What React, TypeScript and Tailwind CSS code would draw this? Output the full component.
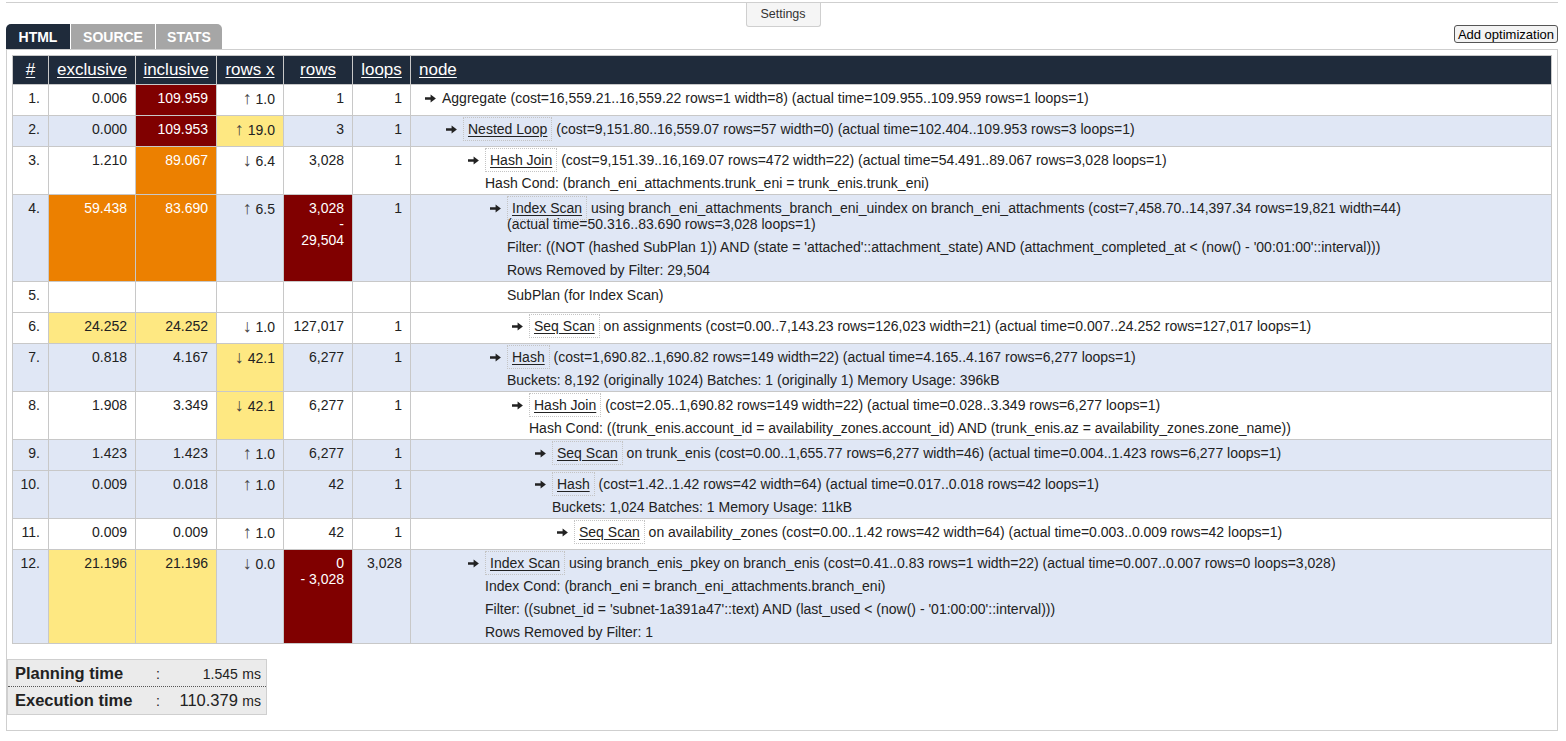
import type { ReactNode } from "react";

type Tone = "" | "red" | "orange" | "yellow";

type Row = {
	n: number;
	blue: boolean;
	ex: string;
	exTone: Tone;
	inc: string;
	incTone: Tone;
	rx: string;
	rxTone: Tone;
	rows: string[];
	rowsTone: Tone;
	loops: string;
	level: number;
	arrow: boolean;
	label: string;
	boxed: boolean;
	text: string;
	actual: string;
	details: string[];
};

const toneClass: Record<Tone, string> = {
	"": "",
	red: "bg-[#800000] text-white",
	orange: "bg-[#ec8000] text-white",
	yellow: "bg-[#fee882]",
};

const indent = [
	"ml-0",
	"ml-[21px]",
	"ml-[43px]",
	"ml-[65px]",
	"ml-[87px]",
	"ml-[110px]",
	"ml-[132px]",
];

const data: Row[] = [
	{
		n: 1,
		blue: false,
		ex: "0.006",
		exTone: "",
		inc: "109.959",
		incTone: "red",
		rx: "↑|1.0",
		rxTone: "",
		rows: ["1"],
		rowsTone: "",
		loops: "1",
		level: 0,
		arrow: true,
		label: "Aggregate",
		boxed: false,
		text: " (cost=16,559.21..16,559.22 rows=1 width=8)",
		actual: "(actual time=109.955..109.959 rows=1 loops=1)",
		details: [],
	},
	{
		n: 2,
		blue: true,
		ex: "0.000",
		exTone: "",
		inc: "109.953",
		incTone: "red",
		rx: "↑|19.0",
		rxTone: "yellow",
		rows: ["3"],
		rowsTone: "",
		loops: "1",
		level: 1,
		arrow: true,
		label: "Nested Loop",
		boxed: true,
		text: " (cost=9,151.80..16,559.07 rows=57 width=0)",
		actual: "(actual time=102.404..109.953 rows=3 loops=1)",
		details: [],
	},
	{
		n: 3,
		blue: false,
		ex: "1.210",
		exTone: "",
		inc: "89.067",
		incTone: "orange",
		rx: "↓|6.4",
		rxTone: "",
		rows: ["3,028"],
		rowsTone: "",
		loops: "1",
		level: 2,
		arrow: true,
		label: "Hash Join",
		boxed: true,
		text: " (cost=9,151.39..16,169.07 rows=472 width=22)",
		actual: "(actual time=54.491..89.067 rows=3,028 loops=1)",
		details: ["Hash Cond: (branch_eni_attachments.trunk_eni = trunk_enis.trunk_eni)"],
	},
	{
		n: 4,
		blue: true,
		ex: "59.438",
		exTone: "orange",
		inc: "83.690",
		incTone: "orange",
		rx: "↑|6.5",
		rxTone: "",
		rows: ["3,028", "-", "29,504"],
		rowsTone: "red",
		loops: "1",
		level: 3,
		arrow: true,
		label: "Index Scan",
		boxed: true,
		text: " using branch_eni_attachments_branch_eni_uindex on branch_eni_attachments (cost=7,458.70..14,397.34 rows=19,821 width=44)",
		actual: "(actual time=50.316..83.690 rows=3,028 loops=1)",
		details: [
			"Filter: ((NOT (hashed SubPlan 1)) AND (state = 'attached'::attachment_state) AND (attachment_completed_at < (now() - '00:01:00'::interval)))",
			"Rows Removed by Filter: 29,504",
		],
	},
	{
		n: 5,
		blue: false,
		ex: "",
		exTone: "",
		inc: "",
		incTone: "",
		rx: "",
		rxTone: "",
		rows: [""],
		rowsTone: "",
		loops: "",
		level: 3,
		arrow: false,
		label: "SubPlan (for Index Scan)",
		boxed: false,
		text: "",
		actual: "",
		details: [],
	},
	{
		n: 6,
		blue: false,
		ex: "24.252",
		exTone: "yellow",
		inc: "24.252",
		incTone: "yellow",
		rx: "↓|1.0",
		rxTone: "",
		rows: ["127,017"],
		rowsTone: "",
		loops: "1",
		level: 4,
		arrow: true,
		label: "Seq Scan",
		boxed: true,
		text: " on assignments (cost=0.00..7,143.23 rows=126,023 width=21)",
		actual: "(actual time=0.007..24.252 rows=127,017 loops=1)",
		details: [],
	},
	{
		n: 7,
		blue: true,
		ex: "0.818",
		exTone: "",
		inc: "4.167",
		incTone: "",
		rx: "↓|42.1",
		rxTone: "yellow",
		rows: ["6,277"],
		rowsTone: "",
		loops: "1",
		level: 3,
		arrow: true,
		label: "Hash",
		boxed: true,
		text: " (cost=1,690.82..1,690.82 rows=149 width=22)",
		actual: "(actual time=4.165..4.167 rows=6,277 loops=1)",
		details: ["Buckets: 8,192 (originally 1024) Batches: 1 (originally 1) Memory Usage: 396kB"],
	},
	{
		n: 8,
		blue: false,
		ex: "1.908",
		exTone: "",
		inc: "3.349",
		incTone: "",
		rx: "↓|42.1",
		rxTone: "yellow",
		rows: ["6,277"],
		rowsTone: "",
		loops: "1",
		level: 4,
		arrow: true,
		label: "Hash Join",
		boxed: true,
		text: " (cost=2.05..1,690.82 rows=149 width=22)",
		actual: "(actual time=0.028..3.349 rows=6,277 loops=1)",
		details: [
			"Hash Cond: ((trunk_enis.account_id = availability_zones.account_id) AND (trunk_enis.az = availability_zones.zone_name))",
		],
	},
	{
		n: 9,
		blue: true,
		ex: "1.423",
		exTone: "",
		inc: "1.423",
		incTone: "",
		rx: "↑|1.0",
		rxTone: "",
		rows: ["6,277"],
		rowsTone: "",
		loops: "1",
		level: 5,
		arrow: true,
		label: "Seq Scan",
		boxed: true,
		text: " on trunk_enis (cost=0.00..1,655.77 rows=6,277 width=46)",
		actual: "(actual time=0.004..1.423 rows=6,277 loops=1)",
		details: [],
	},
	{
		n: 10,
		blue: true,
		ex: "0.009",
		exTone: "",
		inc: "0.018",
		incTone: "",
		rx: "↑|1.0",
		rxTone: "",
		rows: ["42"],
		rowsTone: "",
		loops: "1",
		level: 5,
		arrow: true,
		label: "Hash",
		boxed: true,
		text: " (cost=1.42..1.42 rows=42 width=64)",
		actual: "(actual time=0.017..0.018 rows=42 loops=1)",
		details: ["Buckets: 1,024 Batches: 1 Memory Usage: 11kB"],
	},
	{
		n: 11,
		blue: false,
		ex: "0.009",
		exTone: "",
		inc: "0.009",
		incTone: "",
		rx: "↑|1.0",
		rxTone: "",
		rows: ["42"],
		rowsTone: "",
		loops: "1",
		level: 6,
		arrow: true,
		label: "Seq Scan",
		boxed: true,
		text: " on availability_zones (cost=0.00..1.42 rows=42 width=64)",
		actual: "(actual time=0.003..0.009 rows=42 loops=1)",
		details: [],
	},
	{
		n: 12,
		blue: true,
		ex: "21.196",
		exTone: "yellow",
		inc: "21.196",
		incTone: "yellow",
		rx: "↓|0.0",
		rxTone: "",
		rows: ["0", "- 3,028"],
		rowsTone: "red",
		loops: "3,028",
		level: 2,
		arrow: true,
		label: "Index Scan",
		boxed: true,
		text: " using branch_enis_pkey on branch_enis (cost=0.41..0.83 rows=1 width=22)",
		actual: "(actual time=0.007..0.007 rows=0 loops=3,028)",
		details: [
			"Index Cond: (branch_eni = branch_eni_attachments.branch_eni)",
			"Filter: ((subnet_id = 'subnet-1a391a47'::text) AND (last_used < (now() - '01:00:00'::interval)))",
			"Rows Removed by Filter: 1",
		],
	},
];

function NodeArrow() {
	return (
		<svg width="11" height="9" viewBox="0 0 11 9" className="text-[#222]">
			<path d="M0 3.3h5.6V0.5L10.9 4.5 5.6 8.5V5.7H0z" fill="currentColor" />
		</svg>
	);
}

function NumCell({ tone, children }: { tone: Tone; children: ReactNode }) {
	return (
		<td
			className={`border border-[#c8c8c8] pt-[5px] pb-[3px] pr-[8px] text-right align-top ${toneClass[tone]}`}
		>
			{children}
		</td>
	);
}

function RowsX({ value }: { value: string }) {
	if (!value) return null;
	const [arrow, num] = value.split("|");
	return (
		<>
			<span className="text-[#444] text-[18px] leading-[16px]">{arrow}</span> {num}
		</>
	);
}

function PlanRow({ row }: { row: Row }) {
	return (
		<tr className={row.blue ? "bg-[#e0e7f5]" : "bg-white"}>
			<NumCell tone="">{row.n}.</NumCell>
			<NumCell tone={row.exTone}>{row.ex}</NumCell>
			<NumCell tone={row.incTone}>{row.inc}</NumCell>
			<NumCell tone={row.rxTone}>
				<RowsX value={row.rx} />
			</NumCell>
			<NumCell tone={row.rowsTone}>
				{row.rows.map((r) => (
					<div key={r}>{r}</div>
				))}
			</NumCell>
			<NumCell tone="">{row.loops}</NumCell>
			<td className="border border-[#c8c8c8] pt-[5px] pb-[3px] pl-[14px] pr-[8px] align-top">
				<div className={indent[row.level]}>
					<div className="flex mb-[6px]">
						<span className="w-[17px] shrink-0 h-[16px] flex items-center">
							{row.arrow && <NodeArrow />}
						</span>
						<div className="flex-1">
							{row.boxed ? (
								<span className="border border-dotted border-[#c4c4c4] px-[4px] py-[3px] underline underline-offset-2">
									{row.label}
								</span>
							) : (
								row.label
							)}
							{row.text}{" "}
							<span className="whitespace-nowrap">{row.actual}</span>
						</div>
					</div>
					{row.details.map((d) => (
						<div key={d} className="ml-[17px] mt-[7px]">
							{d}
						</div>
					))}
				</div>
			</td>
		</tr>
	);
}

const headers = [
	{ label: "#", w: "w-[36px]", align: "text-center" },
	{ label: "exclusive", w: "w-[87px]", align: "text-center" },
	{ label: "inclusive", w: "w-[81px]", align: "text-center" },
	{ label: "rows x", w: "w-[67px]", align: "text-center" },
	{ label: "rows", w: "w-[69px]", align: "text-center" },
	{ label: "loops", w: "w-[58px]", align: "text-center" },
	{ label: "node", w: "", align: "text-left pl-[8px]" },
];

export default function App() {
	return (
		<div className="min-h-[741px] bg-white text-[#222] font-['Liberation_Sans',Arial,sans-serif]">
			<div className="pt-[2px]">
				<div className="ml-[6px] mr-[8px] border-t border-[#cfcfcf]" />
				<div className="mx-auto w-[75px] h-[24px] bg-[#f5f5f5] border border-t-0 border-[#cfcfcf] rounded-b-[3px] flex items-center justify-center text-[12.5px] text-[#333]">
					Settings
				</div>
			</div>

			<div className="flex justify-between items-start ml-[6px] mr-[8px] -mt-[3px]">
				<div className="flex gap-[1px] h-[25px]">
					<button
						type="button"
						className="w-[64px] pt-[1px] bg-[#1f2b3b] text-white font-bold text-[14px] rounded-tl-[5px]"
					>
						HTML
					</button>
					<button
						type="button"
						className="w-[84px] pt-[1px] bg-[#a6a6a6] text-white font-bold text-[14px]"
					>
						SOURCE
					</button>
					<button
						type="button"
						className="w-[66px] pt-[1px] bg-[#a6a6a6] text-white font-bold text-[14px] rounded-tr-[5px]"
					>
						STATS
					</button>
				</div>
				<button
					type="button"
					className="mt-[1px] h-[18px] px-[3px] border border-[#555] rounded-[3px] bg-[#f3f3f3] text-[13px] leading-[15px] text-black"
				>
					Add optimization
				</button>
			</div>

			<div className="ml-[6px] mr-[8px] border border-[#cfcfcf]">
				<div className="p-[5px]">
					<table className="w-full table-fixed border-collapse text-[14px] leading-[16px]">
						<colgroup>
							{headers.map((h) => (
								<col key={h.label} className={h.w} />
							))}
						</colgroup>
						<thead>
							<tr className="bg-[#1f2b3b] h-[29px]">
								{headers.map((h) => (
									<th
										key={h.label}
										className={`border border-[#c8c8c8] font-normal text-white text-[17px] underline underline-offset-2 ${h.align}`}
									>
										{h.label}
									</th>
								))}
							</tr>
						</thead>
						<tbody>
							{data.map((row) => (
								<PlanRow key={row.n} row={row} />
							))}
						</tbody>
					</table>
				</div>

				<div className="mt-[10px] mb-[15px] w-[260px] bg-[#ebebeb] border border-[#cfcfcf] text-[#222]">
					<div className="grid grid-cols-[141px_1fr] items-baseline h-[27px] pt-[1px] pl-[7px] pr-[5px] border-b border-dotted border-[#555]">
						<span className="font-bold text-[16.5px]">Planning time</span>
						<div className="flex items-baseline justify-between">
							<span className="text-[14px]">:</span>
							<span>
								<span className="text-[14px]">1.545</span>{" "}
								<span className="text-[14px]">ms</span>
							</span>
						</div>
					</div>
					<div className="grid grid-cols-[141px_1fr] items-baseline h-[27px] pt-[1px] pl-[7px] pr-[5px]">
						<span className="font-bold text-[16.5px]">Execution time</span>
						<div className="flex items-baseline justify-between">
							<span className="text-[14px]">:</span>
							<span>
								<span className="text-[16.5px]">110.379</span>{" "}
								<span className="text-[14px]">ms</span>
							</span>
						</div>
					</div>
				</div>
			</div>
		</div>
	);
}
